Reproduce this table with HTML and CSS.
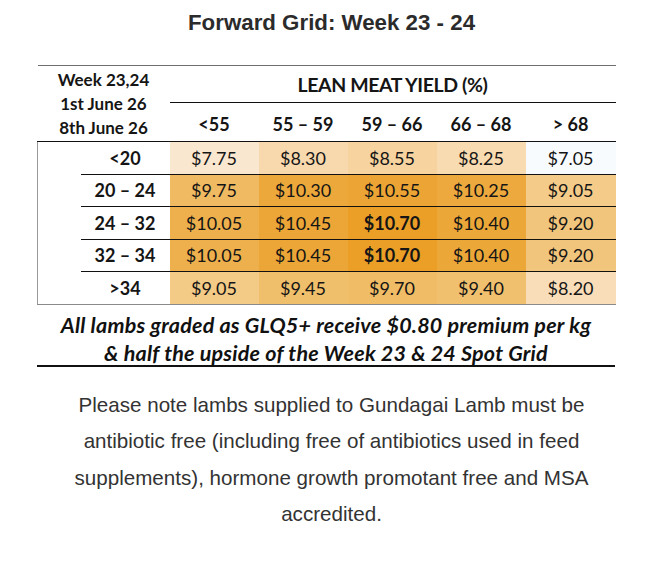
FILE: index.html
```html
<!DOCTYPE html>
<html lang="en">
<head>
<meta charset="utf-8">
<title>Forward Grid: Week 23 - 24</title>
<link rel="stylesheet" href="styles.css">
</head>
<body>
<main class="page">
  <h2 class="title">Forward Grid: Week 23 - 24</h2>
  <div class="grid-wrap">
    <table class="grid">
      <colgroup>
        <col class="c-pad"><col class="c-label">
        <col class="c-val"><col class="c-val"><col class="c-val"><col class="c-val"><col class="c-last">
      </colgroup>
      <thead>
        <tr class="hr1">
          <th class="week" colspan="2" rowspan="2"><span>Week 23,24</span><span>1st June 26</span><span>8th June 26</span></th>
          <th class="lmy" colspan="5">LEAN MEAT YIELD (%)</th>
        </tr>
        <tr class="hr2">
          <th>&lt;55</th><th>55 – 59</th><th>59 – 66</th><th>66 – 68</th><th>&gt; 68</th>
        </tr>
      </thead>
      <tbody>
        <tr>
          <td class="pad"></td><th class="lbl">&lt;20</th>
          <td class="v11">$7.75</td><td class="v12">$8.30</td><td class="v13">$8.55</td><td class="v14">$8.25</td><td class="v15">$7.05</td>
        </tr>
        <tr>
          <td class="pad"></td><th class="lbl">20 – 24</th>
          <td class="v21">$9.75</td><td class="v22">$10.30</td><td class="v23">$10.55</td><td class="v24">$10.25</td><td class="v25">$9.05</td>
        </tr>
        <tr>
          <td class="pad"></td><th class="lbl">24 – 32</th>
          <td class="v31">$10.05</td><td class="v32">$10.45</td><td class="v33 strong">$10.70</td><td class="v34">$10.40</td><td class="v35">$9.20</td>
        </tr>
        <tr>
          <td class="pad"></td><th class="lbl">32 – 34</th>
          <td class="v31">$10.05</td><td class="v32">$10.45</td><td class="v33 strong">$10.70</td><td class="v34">$10.40</td><td class="v35">$9.20</td>
        </tr>
        <tr class="last">
          <td class="pad"></td><th class="lbl">&gt;34</th>
          <td class="v51">$9.05</td><td class="v52">$9.45</td><td class="v53">$9.70</td><td class="v54">$9.40</td><td class="v55">$8.20</td>
        </tr>
      </tbody>
    </table>
    <p class="note">All lambs graded as GLQ5+ receive $0.80 premium per kg<br>&amp; half the upside of the Week 23 &amp; 24 Spot Grid</p>
  </div>
  <p class="para">Please note lambs supplied to Gundagai Lamb must be antibiotic free (including free of antibiotics used in feed supplements), hormone growth promotant free and MSA accredited.</p>
</main>
</body>
</html>
```

FILE: styles.css
```css
html, body {
  margin: 0;
  padding: 0;
  background: #fff;
}

.page {
  width: 663px;
  font-family: "Liberation Sans", Arial, sans-serif;
  color: #333;
}

.title {
  margin: 0;
  padding-top: 9px;
  height: 65px;
  box-sizing: border-box;
  text-align: center;
  font-size: 22.3px;
  font-weight: bold;
  line-height: 28px;
  color: #2b2b2b;
}

.grid-wrap {
  margin-left: 37px;
  width: 578px;
}

.grid {
  width: 578px;
  table-layout: fixed;
  border-collapse: collapse;
  font-family: Lato, "Open Sans", sans-serif;
  color: #151515;
  border-top: 1px solid #6e6e6e;
}

.c-pad { width: 43px; }
.c-label { width: 89px; }
.c-val { width: 89px; }
.c-last { width: 90px; }

.grid th, .grid td {
  padding: 0;
  text-align: center;
  white-space: nowrap;
}

.week {
  vertical-align: top;
  font-size: 17px;
  font-weight: bold;
  line-height: 24px;
  padding-top: 2px !important;
  border-bottom: 1px solid #111;
}

.week span {
  display: block;
}

.hr1 th.lmy {
  height: 36px;
  font-size: 19.5px;
  font-weight: bold;
  letter-spacing: -0.4px;
  border-bottom: 1px solid #111;
  vertical-align: middle;
}

.hr2 th {
  height: 34px;
  font-size: 18px;
  font-weight: bold;
  border-bottom: 1px solid #111;
  vertical-align: middle;
  padding-top: 4px;
}

.grid tbody tr {
  height: 32.5px;
}

.grid tbody td, .grid tbody th {
  border-bottom: 1px solid #111;
  font-size: 18px;
  font-weight: normal;
}

.grid tbody th.lbl {
  font-weight: bold;
  text-align: center;
}

.grid tbody td.pad {
  border-bottom: none;
  border-left: 1px solid #9a9a9a;
}

.grid tbody tr.last td,
.grid tbody tr.last th {
  border-bottom: 1px solid #8a8a8a;
}

.strong { font-weight: bold !important; }

.v11 { background: #fae7d0; }
.v12 { background: #f8d9ae; }
.v13 { background: #f7d39f; }
.v14 { background: #f8dbb0; }
.v15 { background: #f8fbfe; }

.v21 { background: #f0ba62; }
.v22 { background: #eda83b; }
.v23 { background: #eca534; }
.v24 { background: #eda93d; }
.v25 { background: #f4cb88; }

.v31 { background: #eeb04c; }
.v32 { background: #eca637; }
.v33 { background: #eb9f27; }
.v34 { background: #eca739; }
.v35 { background: #f2c57c; }

.v51 { background: #f3ca86; }
.v52 { background: #f0bf6b; }
.v53 { background: #f0bc65; }
.v54 { background: #f1c06e; }
.v55 { background: #f9ddb9; }

.note {
  margin: 0;
  padding: 6px 0 0;
  height: 62px;
  box-sizing: border-box;
  text-align: center;
  font-family: Lato, "Open Sans", sans-serif;
  font-style: italic;
  font-weight: bold;
  font-size: 21.5px;
  letter-spacing: 0.22px;
  line-height: 28px;
  color: #111;
  border-bottom: 2px solid #111;
}

.para {
  margin: 20px auto 0;
  width: 540px;
  text-align: center;
  font-size: 20.6px;
  line-height: 36.5px;
  color: #333;
}
```
